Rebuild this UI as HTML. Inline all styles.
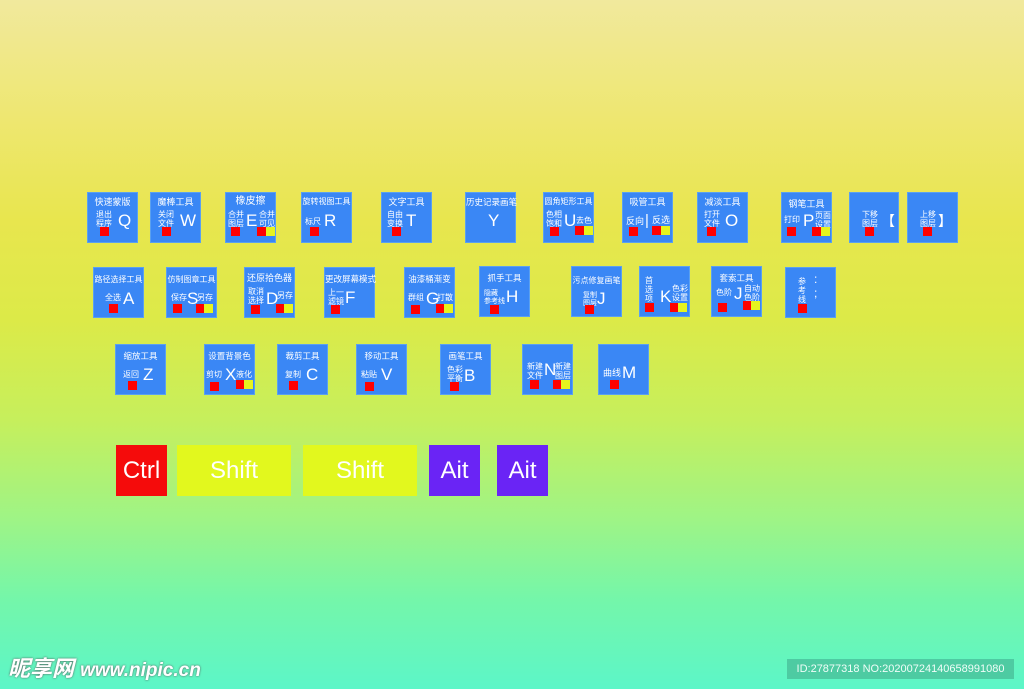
<!DOCTYPE html>
<html><head><meta charset="utf-8"><style>
*{margin:0;padding:0;box-sizing:border-box}
body{width:1024px;height:689px;overflow:hidden;position:relative;font-family:"Liberation Sans","Noto Sans CJK SC",sans-serif;
background:linear-gradient(to bottom,#f1e99d 0px,#eee770 120px,#e8e64e 220px,#dcea48 320px,#c6ef5c 420px,#9ef486 520px,#74f6aa 600px,#5cf6c8 689px);}
.key{position:absolute;width:51px;height:51px;background:#3a87f5;color:#fff;border:1px solid #5aa0f0}
.key div,.key span{position:absolute;white-space:nowrap}
.t{top:3px;left:0;right:0;text-align:center;font-size:9px;line-height:12px}
.l{font-size:8px;line-height:9px;top:17px;left:4px}
.k{font-size:17px;line-height:20px;top:18px}
.r{width:9px;height:9px;background:#f00;top:34px}
.y{width:9px;height:9px;background:#e6f41e;top:34px}
.big{position:absolute;top:445px;height:51px;color:#fff;font-size:24px;line-height:51px;text-align:center}
</style></head><body>
<!-- row 1 -->
<div class="key" style="left:87px;top:192px"><div class="t">快速蒙版</div><div class="l" style="left:8px">退出<br>程序</div><div class="k" style="left:30px">Q</div><div class="r" style="left:12px"></div></div>
<div class="key" style="left:150px;top:192px"><div class="t">魔棒工具</div><div class="l" style="left:7px">关闭<br>文件</div><div class="k" style="left:29px">W</div><div class="r" style="left:11px"></div></div>
<div class="key" style="left:225px;top:192px"><div class="t" style="font-size:10px">橡皮擦</div><div class="l" style="left:2px">合并<br>图层</div><div class="k" style="left:20px">E</div><div class="l" style="left:33px">合并<br>可见</div><div class="r" style="left:5px"></div><div class="r" style="left:31px"></div><div class="y" style="left:40px"></div></div>
<div class="key" style="left:301px;top:192px"><div class="t" style="font-size:8px">旋转视图工具</div><div class="l" style="left:3px;top:24px">标尺</div><div class="k" style="left:22px">R</div><div class="r" style="left:8px"></div></div>
<div class="key" style="left:381px;top:192px"><div class="t">文字工具</div><div class="l" style="left:5px">自由<br>变换</div><div class="k" style="left:24px">T</div><div class="r" style="left:10px"></div></div>
<div class="key" style="left:465px;top:192px"><div class="t" style="font-size:8.5px">历史记录画笔</div><div class="k" style="left:22px">Y</div></div>
<div class="key" style="left:543px;top:192px"><div class="t" style="font-size:8px">圆角矩形工具</div><div class="l" style="left:2px">色相<br>饱和</div><div class="k" style="left:20px">U</div><div class="l" style="left:32px;top:23px">去色</div><div class="r" style="left:6px"></div><div class="r" style="left:31px;top:33px"></div><div class="y" style="left:40px;top:33px"></div></div>
<div class="key" style="left:622px;top:192px"><div class="t">吸管工具</div><div class="l" style="left:3px;top:24px;font-size:9px">反向</div><div class="k" style="left:22px;font-size:15px">|</div><div class="l" style="left:29px;top:23px;font-size:9px">反选</div><div class="r" style="left:6px"></div><div class="r" style="left:29px;top:33px"></div><div class="y" style="left:38px;top:33px"></div></div>
<div class="key" style="left:697px;top:192px"><div class="t">减淡工具</div><div class="l" style="left:6px">打开<br>文件</div><div class="k" style="left:27px">O</div><div class="r" style="left:9px"></div></div>
<div class="key" style="left:781px;top:192px"><div class="t" style="top:5px">钢笔工具</div><div class="l" style="left:2px;top:22px">打印</div><div class="k" style="left:21px">P</div><div class="l" style="left:33px;top:18px">页面<br>设置</div><div class="r" style="left:5px"></div><div class="r" style="left:30px"></div><div class="y" style="left:39px"></div></div>
<div class="key" style="left:849px;top:192px;width:50px"><div class="l" style="left:12px">下移<br>图层</div><div class="k" style="left:31px;font-size:14px">【</div><div class="r" style="left:15px"></div></div>
<div class="key" style="left:907px;top:192px"><div class="l" style="left:12px">上移<br>图层</div><div class="k" style="left:30px;font-size:14px">】</div><div class="r" style="left:15px"></div></div>
<!-- row 2 -->
<div class="key" style="left:93px;top:267px"><div class="t" style="font-size:8px;top:6px">路径选择工具</div><div class="l" style="left:11px;top:25px">全选</div><div class="k" style="left:29px;top:21px">A</div><div class="r" style="left:15px;top:36px"></div></div>
<div class="key" style="left:166px;top:267px"><div class="t" style="font-size:8px;top:6px">仿制图章工具</div><div class="l" style="left:4px;top:25px">保存</div><div class="k" style="left:20px;top:21px">S</div><div class="l" style="left:30px;top:25px">另存</div><div class="r" style="left:6px;top:36px"></div><div class="r" style="left:29px;top:36px"></div><div class="y" style="left:37px;top:36px"></div></div>
<div class="key" style="left:244px;top:267px"><div class="t" style="top:4px">还原拾色器</div><div class="l" style="left:3px;top:19px">取消<br>选择</div><div class="k" style="left:21px;top:21px">D</div><div class="l" style="left:32px;top:23px">另存</div><div class="r" style="left:6px;top:37px"></div><div class="r" style="left:31px;top:36px"></div><div class="y" style="left:39px;top:36px"></div></div>
<div class="key" style="left:324px;top:267px"><div class="t" style="font-size:8.5px;top:5px">更改屏幕模式</div><div class="l" style="left:3px;top:20px">上一<br>滤镜</div><div class="k" style="left:20px;top:20px">F</div><div class="r" style="left:6px;top:37px"></div></div>
<div class="key" style="left:404px;top:267px"><div class="t" style="font-size:8.5px;top:5px">油漆桶渐变</div><div class="l" style="left:3px;top:25px">群组</div><div class="k" style="left:21px;top:21px">G</div><div class="l" style="left:32px;top:25px">打散</div><div class="r" style="left:6px;top:37px"></div><div class="r" style="left:31px;top:36px"></div><div class="y" style="left:39px;top:36px"></div></div>
<div class="key" style="left:479px;top:266px"><div class="t" style="font-size:8.5px;top:5px">抓手工具</div><div class="l" style="left:4px;top:23px;font-size:7px;line-height:8px">隐藏<br>参考线</div><div class="k" style="left:26px;top:20px">H</div><div class="r" style="left:10px;top:38px"></div></div>
<div class="key" style="left:571px;top:266px"><div class="t" style="font-size:8px;top:8px">污点修复画笔</div><div class="l" style="left:11px;top:25px;font-size:7px;line-height:8px">复制<br>图层</div><div class="k" style="left:25px;top:22px">J</div><div class="r" style="left:13px;top:38px"></div></div>
<div class="key" style="left:639px;top:266px"><div class="l" style="left:5px;top:9px;line-height:9px">首<br>选<br>项</div><div class="k" style="left:20px;top:20px">K</div><div class="l" style="left:32px;top:17px">色彩<br>设置</div><div class="r" style="left:5px;top:36px"></div><div class="r" style="left:30px;top:36px"></div><div class="y" style="left:38px;top:36px"></div></div>
<div class="key" style="left:711px;top:266px"><div class="t" style="font-size:8.5px;top:5px">套索工具</div><div class="l" style="left:4px;top:21px">色阶</div><div class="k" style="left:22px;top:17px">J</div><div class="l" style="left:32px;top:17px">自动<br>色阶</div><div class="r" style="left:6px;top:36px"></div><div class="r" style="left:31px;top:34px"></div><div class="y" style="left:39px;top:34px"></div></div>
<div class="key" style="left:785px;top:267px"><div class="l" style="left:12px;top:9px;line-height:9px">参<br>考<br>线</div><div class="k" style="left:28px;top:4px;font-size:12px;line-height:14px">:<br>;</div><div class="r" style="left:12px;top:36px"></div></div>
<!-- row 3 -->
<div class="key" style="left:115px;top:344px"><div class="t" style="font-size:8.5px;top:5px">缩放工具</div><div class="l" style="left:7px;top:25px">返回</div><div class="k" style="left:27px;top:20px">Z</div><div class="r" style="left:12px;top:36px"></div></div>
<div class="key" style="left:204px;top:344px"><div class="t" style="font-size:8.5px;top:5px">设置背景色</div><div class="l" style="left:1px;top:25px">剪切</div><div class="k" style="left:20px;top:20px">X</div><div class="l" style="left:31px;top:25px">液化</div><div class="r" style="left:5px;top:37px"></div><div class="r" style="left:31px;top:35px"></div><div class="y" style="left:39px;top:35px"></div></div>
<div class="key" style="left:277px;top:344px"><div class="t" style="font-size:8.5px;top:5px">裁剪工具</div><div class="l" style="left:7px;top:25px">复制</div><div class="k" style="left:28px;top:20px">C</div><div class="r" style="left:11px;top:36px"></div></div>
<div class="key" style="left:356px;top:344px"><div class="t" style="font-size:8.5px;top:5px">移动工具</div><div class="l" style="left:4px;top:25px">粘贴</div><div class="k" style="left:24px;top:20px">V</div><div class="r" style="left:8px;top:37px"></div></div>
<div class="key" style="left:440px;top:344px"><div class="t" style="font-size:8.5px;top:5px">画笔工具</div><div class="l" style="left:6px;top:20px">色彩<br>平衡</div><div class="k" style="left:23px;top:21px">B</div><div class="r" style="left:9px;top:37px"></div></div>
<div class="key" style="left:522px;top:344px"><div class="l" style="left:4px;top:17px">新建<br>文件</div><div class="k" style="left:21px;top:15px">N</div><div class="l" style="left:32px;top:17px">新建<br>图层</div><div class="r" style="left:7px;top:35px"></div><div class="r" style="left:30px;top:35px"></div><div class="y" style="left:38px;top:35px"></div></div>
<div class="key" style="left:598px;top:344px"><div class="l" style="left:4px;top:24px;font-size:9px">曲线</div><div class="k" style="left:23px;top:18px">M</div><div class="r" style="left:11px;top:35px"></div></div>
<!-- bottom -->
<div class="big" style="left:116px;width:51px;background:#f50b0b">Ctrl</div>
<div class="big" style="left:177px;width:114px;background:#e2f81e">Shift</div>
<div class="big" style="left:303px;width:114px;background:#e2f81e">Shift</div>
<div class="big" style="left:429px;width:51px;background:#6a24f5">Ait</div>
<div class="big" style="left:497px;width:51px;background:#6a24f5">Ait</div>
<!-- watermark -->
<div style="position:absolute;left:8px;top:655px;color:#fff;font-size:22px;font-weight:bold;font-style:italic;line-height:28px;text-shadow:0 0 2px #555">昵享网 <span style="font-size:19px">www.nipic.cn</span></div>
<div style="position:absolute;left:787px;top:659px;width:227px;height:20px;background:#4cc79f;color:#fff;font-size:11px;line-height:20px;text-align:center;opacity:.9">ID:27877318 NO:20200724140658991080</div>
</body></html>
